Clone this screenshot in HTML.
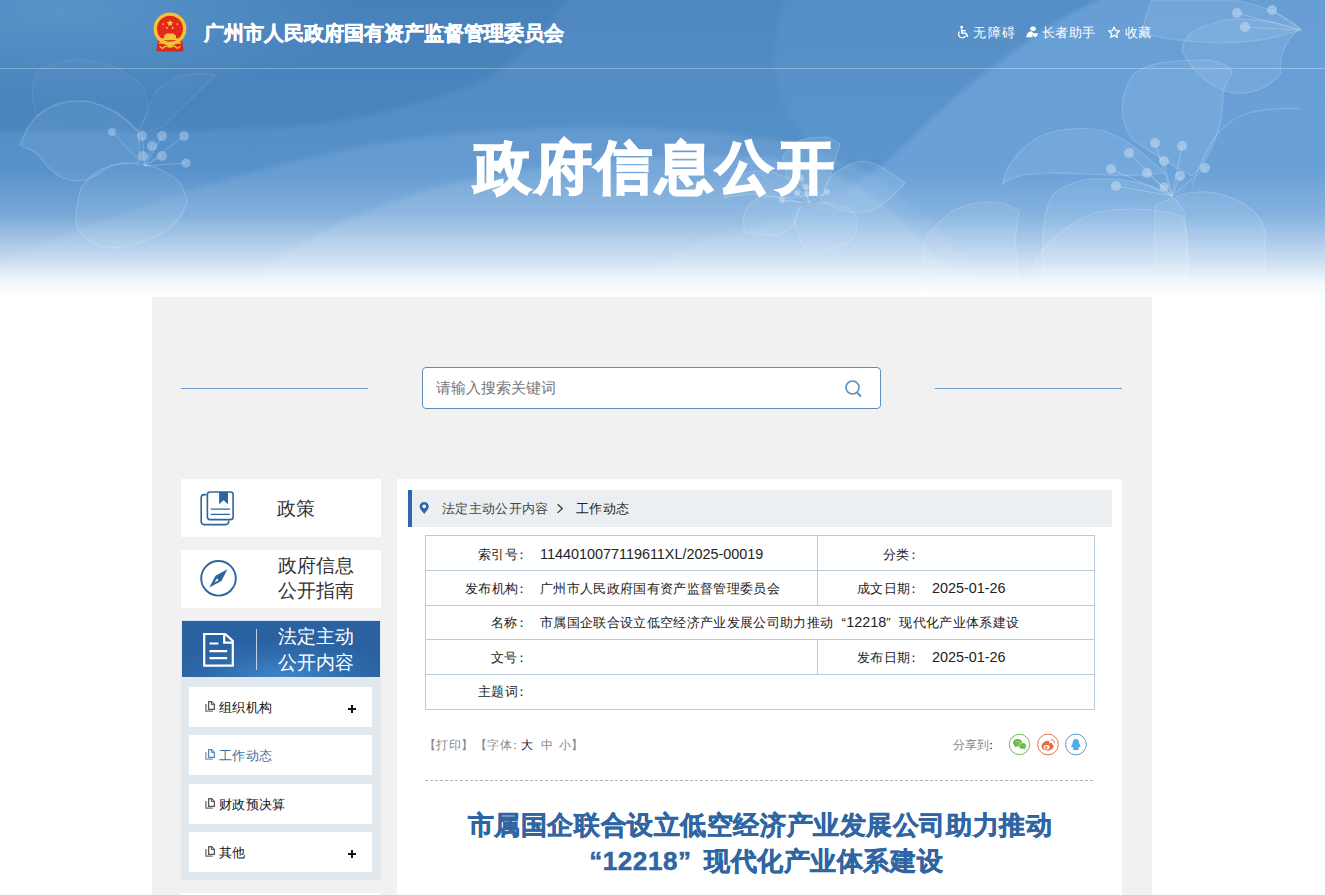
<!DOCTYPE html>
<html><head><meta charset="utf-8">
<style>
*{margin:0;padding:0;box-sizing:border-box}
html,body{width:1325px;height:895px;overflow:hidden;background:#fff;font-family:"Liberation Sans",sans-serif}
.a{position:absolute;white-space:nowrap}
#hdr{position:absolute;left:0;top:0;width:1325px;height:297px;overflow:hidden;
 background:linear-gradient(180deg,#4f8bc5 0px,#5590ca 120px,#6a9fd4 170px,#9fc2e6 220px,#d9e7f5 262px,#ffffff 296px)}
#main{position:absolute;left:152px;top:297px;width:1000px;height:600px;background:#f1f1f1}
.wb{position:absolute;background:#fff}
.t13{font-size:13px;line-height:13.3px;letter-spacing:.33px}
.sub{position:absolute;left:189px;width:183px;height:40px;background:#fff}
.sub .ic{position:absolute;left:16px;top:14px}
.sub .tx{position:absolute;left:30px;top:14px;font-size:13px;line-height:13.3px;letter-spacing:.33px;color:#111;white-space:nowrap}
.sub .pl{position:absolute;left:159px;top:21.3px;width:8px;height:2px;background:#111}
.sub .pl:after{content:"";position:absolute;left:3px;top:-3px;width:2px;height:8px;background:#111}
.row{position:absolute;left:425px;width:670px;border-top:1px solid #b9cbdb}
.lab{position:absolute;font-size:13px;line-height:13.3px;letter-spacing:.33px;color:#222;white-space:nowrap;text-align:right}
.val{position:absolute;font-size:13px;line-height:13.3px;letter-spacing:.33px;color:#222;white-space:nowrap}
.num{font-size:14.4px;letter-spacing:0}
.ql{display:inline-block;width:1em;text-align:right}
.qr{display:inline-block;width:1em;text-align:left}
</style></head><body>
<div id="hdr">
<svg class="a" style="left:0;top:0" width="1325" height="297" viewBox="0 0 1325 297">
<defs>
<linearGradient id="gbase" x1="0" y1="0" x2="0" y2="1">
<stop offset="0" stop-color="#4f88c1"/><stop offset="0.6" stop-color="#5892cb"/><stop offset="1" stop-color="#6a9fd6"/>
</linearGradient>
<linearGradient id="gfade" x1="0" y1="0" x2="0" y2="1">
<stop offset="0" stop-color="#fff" stop-opacity="0"/><stop offset="0.35" stop-color="#fff" stop-opacity="0.17"/><stop offset="0.7" stop-color="#fff" stop-opacity="0.62"/><stop offset="0.88" stop-color="#fff" stop-opacity="0.9"/><stop offset="1" stop-color="#fff" stop-opacity="1"/>
</linearGradient>
<radialGradient id="gtl"><stop offset="0" stop-color="#5b95cb" stop-opacity="0.9"/><stop offset="1" stop-color="#5b95cb" stop-opacity="0"/></radialGradient>
<filter id="blr" x="-10%" y="-10%" width="120%" height="120%"><feGaussianBlur stdDeviation="2.5"/></filter>
</defs>
<rect width="1325" height="297" fill="url(#gbase)"/>
<path d="M785,-20 L785,0 C770,40 772,90 792,122 C815,152 860,175 900,152 C940,120 1000,50 1090,0 L1120,-20 Z" fill="#6aa2d6" opacity="0.25" filter="url(#blr)"/>
<path d="M1120,-20 L1096,0 C1040,25 960,90 915,135 C880,170 840,200 760,225 C700,240 660,250 640,297 L630,330 L1360,330 L1360,-20 Z" fill="#70a6dc" opacity="0.75" filter="url(#blr)"/>
<path d="M-30,-20 H590 L566,0 C540,40 500,80 453,92 C400,110 350,120 317,124 C250,131 150,133 0,131 L-30,131 Z" fill="#3f7bb6" opacity="0.5" filter="url(#blr)"/>
<ellipse cx="60" cy="10" rx="300" ry="90" fill="url(#gtl)"/>
<path d="M-30,330 L-30,275 L0,262 C100,220 250,160 420,138 C560,122 700,125 800,145 C880,165 950,230 990,297 Z" fill="#8fbbe6" opacity="0.25" filter="url(#blr)"/>
<path d="M230,297 C260,262 330,220 427,190 C520,165 640,152 760,157 C850,162 920,220 960,297 Z" fill="#a9cdee" opacity="0.25" filter="url(#blr)"/>
<g fill="#9cc3ea" fill-opacity="0.14" stroke="#cfe2f5" stroke-opacity="0.24" stroke-width="1.2">
<path d="M37,72 C50,64 62,60 74,60 C90,60 100,61 111,65 C125,72 138,80 143,87 C147,95 148,105 148,112 C145,120 141,126 138,131 C125,118 110,108 91,102 C70,98 50,103 37,116 C30,100 32,80 37,72 Z" fill-opacity="0.06" stroke-opacity="0.1"/>
<path d="M148,112 C150,100 155,92 160,87 C170,80 178,76 184,75 C195,73 205,73 216,75 C200,90 180,110 165,125 C158,130 150,132 138,131 Z" fill-opacity="0.06" stroke-opacity="0.1"/>
<path d="M20,145 C25,132 30,122 37,116 C50,106 60,103 62,103 C75,100 85,101 91,102 C105,106 112,110 116,112 C125,118 132,125 138,131 C140,145 140,158 138,163 C125,163 118,164 111,166 C100,172 95,178 86,180 C75,182 68,180 62,178 C55,174 52,170 49,168 C42,160 40,156 37,153 C30,150 25,147 20,145 Z"/>
<path d="M81,188 C77,200 76,212 76,222 C77,228 78,232 81,234 C90,242 96,245 103,247 C112,248 120,248 128,247 C145,242 160,235 172,227 C180,218 185,210 187,202 C186,195 183,188 180,183 C172,175 165,171 157,168 C145,164 135,163 123,163 C112,165 105,167 98,171 C90,176 85,182 81,188 Z"/>
</g>
<g stroke="#cfe2f5" stroke-opacity="0.3" stroke-width="1" fill="none">
<path d="M145,166 L142,136 M145,166 L162,136 M145,166 L184,136 M145,166 L152,146 M145,166 L143,156 M145,166 L162,156 M145,166 L186,163 M145,166 L112,132"/>
</g>
<g fill="#cfe2f5" fill-opacity="0.38">
<circle cx="142" cy="136" r="5"/><circle cx="162" cy="136" r="5"/><circle cx="184" cy="136" r="5"/><circle cx="152" cy="146" r="5"/><circle cx="143" cy="156" r="5"/><circle cx="162" cy="156" r="5"/><circle cx="186" cy="163" r="4.5"/><circle cx="112" cy="132" r="4"/>
</g>
<g fill="#a8cbee" fill-opacity="0.18" stroke="#d4e6f7" stroke-opacity="0.24" stroke-width="1.2">
<path d="M1142,33 C1145,15 1150,5 1152,0 L1232,0 C1265,5 1290,18 1301,30 C1270,40 1240,45 1200,42 C1175,40 1155,38 1142,33 Z"/>
<path d="M1182,50 C1183,38 1190,28 1225,20 C1250,17 1280,22 1298,30 C1285,40 1278,60 1281,73 C1270,88 1250,95 1232,93 C1210,88 1190,70 1182,50 Z"/>
<path d="M1132,139 C1118,120 1120,95 1132,76 C1142,65 1160,60 1209,60 C1222,62 1232,68 1232,73 C1225,85 1222,95 1223,100 C1222,130 1210,160 1192,176 C1170,165 1150,152 1132,139 Z"/>
<path d="M1003,184 C1005,165 1025,140 1049,133 C1070,127 1100,126 1116,136 C1135,145 1150,160 1165,173 C1130,178 1100,174 1086,174 C1060,173 1030,172 1016,177 C1010,179 1005,182 1003,184 Z"/>
<path d="M1043,232 C1045,210 1050,197 1056,192 C1070,182 1085,179 1092,179 C1115,178 1140,180 1165,192 C1178,200 1186,210 1185,219 C1188,240 1189,260 1190,300 L1043,300 Z"/>
<path d="M1155,206 C1170,198 1185,192 1199,192 C1215,191 1240,196 1258,216 C1265,225 1266,235 1265,239 L1265,297 L1155,297 Z"/>
<path d="M923,259 C922,245 925,238 930,232 C940,220 950,212 956,209 C970,203 985,201 993,202 C1005,203 1015,207 1019,212 C1016,230 1015,245 1016,249 C1017,262 1018,280 1019,300 L922,300 C922,285 923,270 923,259 Z"/>
<path d="M1026,282 C1035,255 1050,235 1086,216 C1100,210 1115,209 1132,209 C1155,209 1170,212 1182,216 C1188,230 1188,245 1187,260 L1187,297 L1026,297 Z"/>
<path d="M1192,186 C1200,165 1208,145 1218,133 C1228,122 1238,116 1248,113 C1270,108 1290,108 1301,109" fill="none"/>
<path d="M820,201 C825,185 830,175 838,171 C848,165 855,161 863,161 C870,161 876,164 881,167 C890,172 898,178 905,183 C897,192 889,200 881,205 C875,209 869,212 863,213 C855,213 850,212 845,211 C836,208 828,205 820,201 Z"/>
<path d="M783,156 C790,148 795,143 801,140 C810,137 818,137 827,137 C832,139 836,141 840,144 C838,150 836,158 834,165 C830,176 826,186 823,196 C812,190 800,185 787,178 Z"/>
<path d="M724,198 C730,188 738,178 745,174 C752,171 760,170 769,171 C775,173 781,175 787,178 C795,184 800,190 805,196 C797,198 789,198 782,198 C772,197 763,195 754,194 C744,195 734,196 724,198 Z"/>
<path d="M745,232 C743,226 743,220 744,214 C747,207 750,203 754,200 C760,197 766,196 773,196 C783,197 792,199 801,203 C799,211 797,218 794,225 C789,230 784,233 778,236 C768,236 756,234 745,232 Z"/>
<path d="M794,221 C796,215 798,210 801,207 C810,204 818,202 827,202 C835,203 843,205 850,209 C854,213 856,217 858,221 C857,227 856,232 854,238 C849,242 843,245 838,247 C830,250 821,252 812,254 C808,251 804,247 801,243 C798,236 796,228 794,221 Z"/>
</g>
<g stroke="#d4e6f7" stroke-opacity="0.32" stroke-width="1" fill="none">
<path d="M1172,196 L1155,143 M1172,196 L1182,146 M1172,196 L1129,153 M1172,196 L1164,161 M1172,196 L1111,169 M1172,196 L1147,173 M1172,196 L1180,176 M1172,196 L1205,168 M1172,196 L1116,186 M1172,196 L1164,187"/>
<path d="M1301,30 L1237,13 M1301,30 L1272,10 M1301,30 L1245,27"/>
<path d="M809,203 L801,178 M809,203 L806,187 M809,203 L797,193 M809,203 L827,192 M809,203 L782,200 M809,203 L814,196"/>
</g>
<g fill="#d4e6f7" fill-opacity="0.45">
<circle cx="1155" cy="143" r="5"/><circle cx="1182" cy="146" r="5"/><circle cx="1129" cy="153" r="5"/><circle cx="1164" cy="161" r="5"/><circle cx="1111" cy="169" r="5"/><circle cx="1147" cy="173" r="5"/><circle cx="1180" cy="176" r="5"/><circle cx="1205" cy="168" r="5"/><circle cx="1116" cy="186" r="5"/><circle cx="1164" cy="187" r="4.5"/>
<circle cx="1237" cy="13" r="5"/><circle cx="1272" cy="10" r="5"/><circle cx="1245" cy="27" r="5"/>
<circle cx="801" cy="178" r="3"/><circle cx="806" cy="187" r="3"/><circle cx="797" cy="193" r="3"/><circle cx="807" cy="194" r="3"/><circle cx="827" cy="192" r="3"/><circle cx="782" cy="200" r="3"/>
</g>
<rect x="0" y="170" width="1325" height="127" fill="url(#gfade)"/>
<line x1="0" y1="68.5" x2="1325" y2="68.5" stroke="#fff" stroke-opacity="0.3" stroke-width="1"/>
</svg>

<svg class="a" style="left:152px;top:12px" width="36" height="41" viewBox="0 0 36 41">
<path d="M6,28 L30,28 L31.6,37.6 Q31.9,39.6 29.9,39.6 L6.1,39.6 Q4.1,39.6 4.4,37.6 Z" fill="#d9281e"/>
<circle cx="18" cy="16.8" r="14.6" fill="#e3291f"/>
<circle cx="18" cy="16.8" r="14.7" fill="none" stroke="#f2c434" stroke-width="3.4"/>
<rect x="12.1" y="23.2" width="11.8" height="4.2" fill="#f4ca3a"/>
<rect x="13.7" y="21.6" width="8.6" height="1.8" fill="#f4ca3a"/>
<rect x="7.3" y="26.3" width="21" height="1.9" fill="#f2c434"/>
<path d="M7,31.2 Q12,29.6 18,33 Q24,29.6 29,31.2" fill="none" stroke="#f2c434" stroke-width="1.6"/>
<path d="M7.5,34.2 L10.5,36.5 L13,34.4 Q18,32.8 23,34.4 L25.5,36.5 L28.5,34.2" fill="none" stroke="#f2c434" stroke-width="1.3"/>
<ellipse cx="18" cy="34.6" rx="3" ry="1.2" fill="#f2c434"/>
<polygon points="18,7.5 18.9,10.1 21.6,10.1 19.4,11.7 20.3,14.3 18,12.7 15.7,14.3 16.6,11.7 14.4,10.1 17.1,10.1" fill="#f4cf3a"/>
<circle cx="11.3" cy="12.1" r="0.9" fill="#f4cf3a"/><circle cx="25.2" cy="12.1" r="0.9" fill="#f4cf3a"/>
<circle cx="15" cy="16" r="0.9" fill="#f4cf3a"/><circle cx="20.7" cy="16" r="0.9" fill="#f4cf3a"/>
</svg>
<svg class="a" style="left:954px;top:22px" width="20" height="20" viewBox="0 0 20 20">
<circle cx="7.7" cy="5.2" r="1.4" fill="#fff"/>
<path d="M7.6,7 L8,11.3 L12,11.3 L13.8,14.8" fill="none" stroke="#fff" stroke-width="1.6" stroke-linejoin="round"/>
<path d="M8,8.7 L11.8,8.7" stroke="#fff" stroke-width="1.4"/>
<path d="M5.6,9.6 A3.7,3.7 0 1 0 11.6,13.8" fill="none" stroke="#fff" stroke-width="1.3"/>
</svg>
<svg class="a" style="left:1022px;top:22px" width="20" height="20" viewBox="0 0 20 20">
<ellipse cx="11" cy="6.7" rx="2.9" ry="2.2" transform="rotate(15 11 6.7)" fill="#fff"/>
<path d="M4.2,15.3 C4.5,12 6.5,9.2 9.5,9.2 L11,10.5 C10.5,12 10.5,13.5 10.8,15.3 Z" fill="#fff"/>
<path d="M13.2,15.4 C11.5,14 10.5,13 10.5,12.3 C10.5,11.4 11.3,11 12,11 C12.6,11 13,11.4 13.2,11.8 C13.4,11.4 13.8,11 14.4,11 C15.2,11 15.9,11.5 15.9,12.3 C15.9,13 14.9,14 13.2,15.4 Z" fill="#fff"/>
</svg>
<svg class="a" style="left:1104px;top:22px" width="20" height="20" viewBox="0 0 20 20">
<polygon points="10.1,5 11.7,8.6 15.5,9 12.6,11.6 13.4,15.4 10.1,13.4 6.8,15.4 7.6,11.6 4.7,9 8.5,8.6" fill="none" stroke="#fff" stroke-width="1.3" stroke-linejoin="round"/>
</svg>
  <div class="a" style="left:204px;top:23px;font-size:20px;line-height:20px;font-weight:bold;color:#fff;-webkit-text-stroke:.5px #fff">广州市人民政府国有资产监督管理委员会</div>
  <div class="a t13" style="left:973px;top:26px;color:#fff;letter-spacing:1.6px">无障碍</div>
  <div class="a t13" style="left:1042px;top:26px;color:#fff">长者助手</div>
  <div class="a t13" style="left:1125px;top:26px;color:#fff">收藏</div>
  <div class="a" style="left:474px;top:138.5px;font-size:57px;line-height:57px;letter-spacing:3.6px;font-weight:bold;color:#fff;-webkit-text-stroke:2px #fff">政府信息公开</div>
</div>
<div id="main"></div>

<!-- search -->
<div class="a" style="left:181px;top:388px;width:187px;height:1px;background:#6e9cc6"></div>
<div class="a" style="left:935px;top:388px;width:187px;height:1px;background:#6e9cc6"></div>
<div class="a" style="left:422px;top:367px;width:459px;height:42px;background:#fff;border:1px solid #5e8fbb;border-radius:4px"></div>
<div class="a" style="left:436px;top:380px;font-size:15px;line-height:15px;color:#777">请输入搜索关键词</div>
<svg class="a" style="left:843px;top:378px" width="22" height="22" viewBox="0 0 22 22"><circle cx="9.5" cy="9.5" r="6.5" fill="none" stroke="#5e8fbb" stroke-width="1.6"/><path d="M14 14.5 L18 18.5" stroke="#5e8fbb" stroke-width="1.8"/></svg>

<!-- sidebar -->
<div class="wb" style="left:181px;top:479px;width:200px;height:58px"></div>
<div class="a" style="left:277px;top:499px;font-size:19px;line-height:19px;color:#333">政策</div>
<div class="wb" style="left:181px;top:550px;width:200px;height:58px"></div>
<div class="a" style="left:278px;top:552.8px;font-size:19px;line-height:25.4px;color:#333;white-space:normal;width:80px">政府信息<br>公开指南</div>
<div class="a" style="left:181px;top:620px;width:200px;height:58px;background:#dbe8f5"></div>
<div class="a" style="left:182px;top:621px;width:198px;height:56px;background:radial-gradient(ellipse 60% 70% at 50% 100%,#3f86cc 0%,#2f6aab 60%,#2a61a0 100%)"></div>
<div class="a" style="left:256px;top:629px;width:1px;height:41px;background:rgba(255,255,255,.7)"></div>
<div class="a" style="left:278px;top:624.4px;font-size:19px;line-height:25.3px;color:#fff;white-space:normal;width:80px">法定主动<br>公开内容</div>
<div class="a" style="left:181px;top:677px;width:200px;height:203px;background:#e1e9ef"></div>
<div class="sub" style="top:687px"><svg class="ic" style="left:11px;top:8px" width="20" height="23" viewBox="0 0 20 23"><path d="M5.9,9 V16.2 H12.9" fill="none" stroke="#555" stroke-width="1.3" opacity="0.85"/><path d="M8.6,6.6 H11.6 L14.4,9.4 V14.4 H8.6 Z" fill="none" stroke="#555" stroke-width="1.3" stroke-linejoin="round"/><path d="M11.4,6.8 V9.6 H14.2" fill="none" stroke="#555" stroke-width="1"/></svg><div class="tx">组织机构</div><div class="pl"></div></div>
<div class="sub" style="top:735px"><svg class="ic" style="left:11px;top:8px" width="20" height="23" viewBox="0 0 20 23"><path d="M5.9,9 V16.2 H12.9" fill="none" stroke="#5a87b8" stroke-width="1.3" opacity="0.85"/><path d="M8.6,6.6 H11.6 L14.4,9.4 V14.4 H8.6 Z" fill="none" stroke="#5a87b8" stroke-width="1.3" stroke-linejoin="round"/><path d="M11.4,6.8 V9.6 H14.2" fill="none" stroke="#5a87b8" stroke-width="1"/></svg><div class="tx" style="color:#3d6f9e">工作动态</div></div>
<div class="sub" style="top:784px"><svg class="ic" style="left:11px;top:8px" width="20" height="23" viewBox="0 0 20 23"><path d="M5.9,9 V16.2 H12.9" fill="none" stroke="#555" stroke-width="1.3" opacity="0.85"/><path d="M8.6,6.6 H11.6 L14.4,9.4 V14.4 H8.6 Z" fill="none" stroke="#555" stroke-width="1.3" stroke-linejoin="round"/><path d="M11.4,6.8 V9.6 H14.2" fill="none" stroke="#555" stroke-width="1"/></svg><div class="tx">财政预决算</div></div>
<div class="sub" style="top:832px"><svg class="ic" style="left:11px;top:8px" width="20" height="23" viewBox="0 0 20 23"><path d="M5.9,9 V16.2 H12.9" fill="none" stroke="#555" stroke-width="1.3" opacity="0.85"/><path d="M8.6,6.6 H11.6 L14.4,9.4 V14.4 H8.6 Z" fill="none" stroke="#555" stroke-width="1.3" stroke-linejoin="round"/><path d="M11.4,6.8 V9.6 H14.2" fill="none" stroke="#555" stroke-width="1"/></svg><div class="tx">其他</div><div class="pl"></div></div>
<div class="wb" style="left:181px;top:893px;width:200px;height:10px"></div>

<svg class="a" style="left:196px;top:486px" width="44" height="44" viewBox="0 0 44 44">
<path d="M10.6,8.6 H8.2 Q5.2,8.6 5.2,11.6 V35.6 Q5.2,38.6 8.2,38.6 H29.7 Q32.7,38.6 32.7,35.6 V34.4" fill="none" stroke="#2f659f" stroke-width="1.6"/>
<rect x="11.4" y="6" width="25.7" height="27.6" rx="2.6" fill="none" stroke="#2f659f" stroke-width="1.6"/>
<path d="M23.1,6 H32 V18.2 L27.55,14.3 L23.1,18.2 Z" fill="#2f659f"/>
<path d="M14.7,23.1 H33.9 M14.7,28.4 H33.9" stroke="#2f659f" stroke-width="1.4"/>
</svg>
<svg class="a" style="left:196px;top:556px" width="44" height="44" viewBox="0 0 44 44">
<circle cx="22.5" cy="22.3" r="17.3" fill="none" stroke="#2f659f" stroke-width="1.9"/>
<path d="M31.5,13.3 L25.4,25 L13.3,31.5 L19.5,19.8 Z" fill="#2f659f"/>
<path d="M21,22.2 L18.4,26.4 L22.6,24.2 Z" fill="#fff"/>
</svg>
<svg class="a" style="left:196px;top:626px" width="44" height="44" viewBox="0 0 44 44">
<path d="M8.2,8 H29.3 L36.8,15 V39.7 H8.2 Z" fill="none" stroke="#fff" stroke-width="2.2" stroke-linejoin="miter"/>
<path d="M28.2,8 V16.6 H36.8" fill="none" stroke="#fff" stroke-width="2.2"/>
<path d="M13.5,17.5 H22.4 M13.5,25.1 H31.2 M13.5,32.2 H31.2" stroke="#fff" stroke-width="2.2"/>
</svg>

<!-- content -->
<div class="wb" style="left:397px;top:479px;width:725px;height:420px"></div>
<div class="a" style="left:408px;top:490px;width:704px;height:37px;background:#eceff2;border-left:4px solid #2e69a6"></div>
<svg class="a" style="left:414px;top:498px" width="20" height="20" viewBox="0 0 20 20"><path d="M10.2,16 C8.5,13.5 5.6,11 5.6,8.6 A4.6,4.6 0 0 1 14.8,8.6 C14.8,11 11.9,13.5 10.2,16 Z" fill="#2e68a5"/><circle cx="10.2" cy="8.4" r="1.8" fill="#fff"/></svg>
<svg class="a" style="left:555px;top:502px" width="10" height="13" viewBox="0 0 10 13"><path d="M2.6,2.3 L7.2,6.6 L2.6,10.9" fill="none" stroke="#333" stroke-width="1.3"/></svg>
<div class="a t13" style="left:442px;top:502px;color:#444">法定主动公开内容</div>
<div class="a t13" style="left:576px;top:502px;color:#222">工作动态</div>

<div class="a" style="left:425px;top:535px;width:670px;height:175px;border:1px solid #b9cbdb"></div>
<div class="a" style="left:426px;top:570px;width:668px;height:1px;background:#b9cbdb"></div>
<div class="a" style="left:426px;top:605px;width:668px;height:1px;background:#b9cbdb"></div>
<div class="a" style="left:426px;top:639px;width:668px;height:1px;background:#b9cbdb"></div>
<div class="a" style="left:426px;top:674px;width:668px;height:1px;background:#b9cbdb"></div>
<div class="a" style="left:817px;top:536px;width:1px;height:34px;background:#b9cbdb"></div>
<div class="a" style="left:817px;top:571px;width:1px;height:34px;background:#b9cbdb"></div>
<div class="a" style="left:817px;top:640px;width:1px;height:34px;background:#b9cbdb"></div>

<div class="lab" style="left:478px;top:548px">索引号<span style="position:relative;left:-3px">：</span></div>
<div class="val num" style="left:540px;top:548px">1144010077119611XL/2025-00019</div>
<div class="lab" style="left:883px;top:548px">分类<span style="position:relative;left:-3px">：</span></div>
<div class="lab" style="left:465px;top:582px">发布机构<span style="position:relative;left:-3px">：</span></div>
<div class="val" style="left:540px;top:582px">广州市人民政府国有资产监督管理委员会</div>
<div class="lab" style="left:857px;top:582px">成文日期<span style="position:relative;left:-3px">：</span></div>
<div class="val num" style="left:932px;top:582px">2025-01-26</div>
<div class="lab" style="left:491px;top:616px">名称<span style="position:relative;left:-3px">：</span></div>
<div class="val" style="left:540px;top:616px">市属国企联合设立低空经济产业发展公司助力推动<span class="ql">“</span><span class="num">12218</span><span class="qr">”</span>现代化产业体系建设</div>
<div class="lab" style="left:491px;top:651px">文号<span style="position:relative;left:-3px">：</span></div>
<div class="lab" style="left:857px;top:651px">发布日期<span style="position:relative;left:-3px">：</span></div>
<div class="val num" style="left:932px;top:651px">2025-01-26</div>
<div class="lab" style="left:478px;top:685px">主题词<span style="position:relative;left:-3px">：</span></div>

<div class="a" style="left:424px;top:739px;font-size:12px;line-height:12px;color:#888;letter-spacing:.3px">【打印】</div>
<div class="a" style="left:475px;top:739px;font-size:12px;line-height:12px;color:#888;letter-spacing:.3px">【字体<span style="position:relative;left:-3px">：</span></div>
<div class="a" style="left:521px;top:739px;font-size:12px;line-height:12px;color:#222">大</div>
<div class="a" style="left:540.5px;top:739px;font-size:12px;line-height:12px;color:#888">中</div>
<div class="a" style="left:559px;top:739px;font-size:12px;line-height:12px;color:#888">小】</div>
<div class="a" style="left:953px;top:739px;font-size:12px;line-height:12px;color:#888">分享到<span style="color:#222;position:relative;left:-4px">：</span></div>
<svg class="a" style="left:1005px;top:730px" width="86" height="30" viewBox="0 0 86 30">
<circle cx="14.45" cy="14.45" r="10.2" fill="none" stroke="#72bc54" stroke-width="1"/>
<ellipse cx="12.6" cy="12.8" rx="4.5" ry="3.8" fill="#67b843"/>
<path d="M10,15.5 L9.6,17.6 L11.8,16.3 Z" fill="#67b843"/>
<ellipse cx="17.6" cy="15.9" rx="3.8" ry="3.2" fill="#67b843" stroke="#fff" stroke-width="0.6"/>
<path d="M19.6,18.3 L20.2,19.8 L18.4,18.9 Z" fill="#67b843"/>
<circle cx="11.3" cy="11.8" r="0.55" fill="#fff"/><circle cx="13.9" cy="11.8" r="0.55" fill="#fff"/>
<circle cx="16.4" cy="15.4" r="0.45" fill="#fff"/><circle cx="18.8" cy="15.4" r="0.45" fill="#fff"/>
<circle cx="43" cy="14.45" r="10.4" fill="none" stroke="#e4734b" stroke-width="1"/>
<path d="M36.5,16.6 C36.5,13.5 40.5,10.3 43.3,10.8 C44.8,11.1 44.4,12.6 44.1,13.4 C46,12.6 47.6,12.8 47.2,14.6 C48.6,15.2 49,16.2 48.4,17.4 C47.4,19.4 44.6,20.5 42,20.5 C39,20.5 36.5,19 36.5,16.6 Z" fill="#ec6a37"/>
<ellipse cx="41.6" cy="17.3" rx="3" ry="2.2" fill="#fff"/>
<circle cx="41.3" cy="17.4" r="1.2" fill="#ec6a37"/>
<path d="M45.8,9.8 A3.2,3.2 0 0 1 49.5,13.2" fill="none" stroke="#ec6a37" stroke-width="1"/>
<circle cx="70.9" cy="14.45" r="10.4" fill="none" stroke="#4f9fd6" stroke-width="1"/>
<path d="M70.9,9.1 C68.6,9.1 67.7,10.9 67.7,13 C66.6,14.6 66,16.3 66.6,17.4 L67.6,16.7 C67.9,17.6 68.2,18.3 68.5,18.7 C67.7,19.3 67.6,20.1 69.3,20.1 L72.5,20.1 C74.2,20.1 74.1,19.3 73.3,18.7 C73.6,18.3 73.9,17.6 74.2,16.7 L75.2,17.4 C75.8,16.3 75.2,14.6 74.1,13 C74.1,10.9 73.2,9.1 70.9,9.1 Z" fill="#4aaee8"/>
</svg>

<div class="a" style="left:425px;top:780px;width:670px;height:1px;background:repeating-linear-gradient(90deg,#b3b3b3 0 3px,transparent 3px 5px)"></div>

<div class="a" style="left:467px;top:807px;font-size:26px;letter-spacing:.58px;line-height:36px;font-weight:bold;color:#2f65a2;-webkit-text-stroke:.5px #2f65a2;text-align:center;width:586px">市属国企联合设立低空经济产业发展公司助力推动<br><span class="ql">“</span>12218<span class="qr">”</span>现代化产业体系建设</div>
</body></html>
